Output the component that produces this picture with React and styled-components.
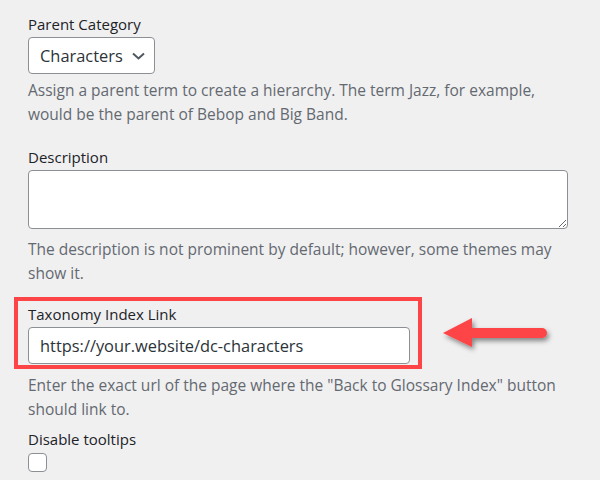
import styled, { createGlobalStyle } from "styled-components";

const GlobalStyle = createGlobalStyle`
  html, body {
    margin: 0;
    padding: 0;
    background: #f0f0f1;
  }
  body {
    font-family: "Open Sans", "Noto Sans", sans-serif;
    color: #1d2327;
  }
`;

const Page = styled.div`
  position: relative;
  width: 600px;
  height: 480px;
  overflow: hidden;
  box-sizing: border-box;
  padding: 14px 0 0 28px;
`;

const Field = styled.div`
  display: flex;
  flex-direction: column;
  align-items: flex-start;
  margin-bottom: ${({ $gap }) => $gap || 0}px;
`;

const Highlight = styled(Field)`
  margin-left: -14px;
  width: 408px;
  box-sizing: border-box;
  padding: 3px 0 1px 10px;
  border: 4px solid #fd4447;
  margin-bottom: 0;
`;

const Label = styled.label`
  font-size: 15px;
  line-height: 20px;
  color: #1d2327;
  margin-bottom: 3px;
`;

const Select = styled.div`
  display: flex;
  align-items: center;
  gap: 9px;
  height: 37px;
  box-sizing: border-box;
  padding: 0 9px 0 11px;
  background: #fff;
  border: 1px solid #8c8f94;
  border-radius: 4px;
  font-size: 16.4px;
  color: #2c3338;
`;

const TextArea = styled.textarea`
  width: 540px;
  height: 59px;
  box-sizing: border-box;
  margin: 0;
  background: #fff;
  border: 1px solid #8c8f94;
  border-radius: 4px;
  font-family: inherit;
`;

const Input = styled.div`
  width: 382px;
  height: 37px;
  box-sizing: border-box;
  display: flex;
  align-items: center;
  padding: 0 11px;
  background: #fff;
  border: 1px solid #8c8f94;
  border-radius: 4px;
  font-size: 16.4px;
  color: #2c3338;
`;

const Hint = styled.p`
  margin: ${({ $top }) => $top || 4}px 0 0;
  font-size: 15.5px;
  line-height: 24px;
  color: #646970;
  max-width: 540px;
`;

const Checkbox = styled.span`
  display: block;
  width: 19px;
  height: 19px;
  box-sizing: border-box;
  margin-top: 1px;
  background: #fff;
  border: 1px solid #8c8f94;
  border-radius: 4px;
`;

const Arrow = styled.svg`
  position: absolute;
  left: 430px;
  top: 305px;
  overflow: visible;
`;

function Chevron() {
  return (
    <svg width="13" height="8" viewBox="0 0 13 8">
      <path d="M1 1.5l5.5 5 5.5-5" fill="none" stroke="#50575e" strokeWidth="2" />
    </svg>
  );
}

export default function App() {
  return (
    <>
      <GlobalStyle />
      <Page>
        <Field $gap={21}>
          <Label>Parent Category</Label>
          <Select>
            Characters
            <Chevron />
          </Select>
          <Hint>
            Assign a parent term to create a hierarchy. The term Jazz, for example,
            would be the parent of Bebop and Big Band.
          </Hint>
        </Field>

        <Field $gap={12}>
          <Label>Description</Label>
          <TextArea />
          <Hint $top={8}>
            The description is not prominent by default; however, some themes may
            show it.
          </Hint>
        </Field>

        <Highlight>
          <Label>Taxonomy Index Link</Label>
          <Input>https://your.website/dc-characters</Input>
        </Highlight>

        <Field $gap={8}>
          <Hint $top={0}>
            Enter the exact url of the page where the "Back to Glossary Index" button
            should link to.
          </Hint>
        </Field>

        <Field>
          <Label>Disable tooltips</Label>
          <Checkbox />
        </Field>

        <Arrow width="130" height="60" viewBox="0 0 130 60">
          <defs>
            <filter id="sh" x="-20%" y="-40%" width="150%" height="200%">
              <feDropShadow dx="2" dy="3" stdDeviation="2.5" floodColor="#000" floodOpacity="0.45" />
            </filter>
          </defs>
          <g filter="url(#sh)" fill="#fd4447">
            <path d="M13 28 L42 13 L42 42 Z" />
            <rect x="38" y="23" width="79" height="10" rx="5" />
          </g>
        </Arrow>
      </Page>
    </>
  );
}
